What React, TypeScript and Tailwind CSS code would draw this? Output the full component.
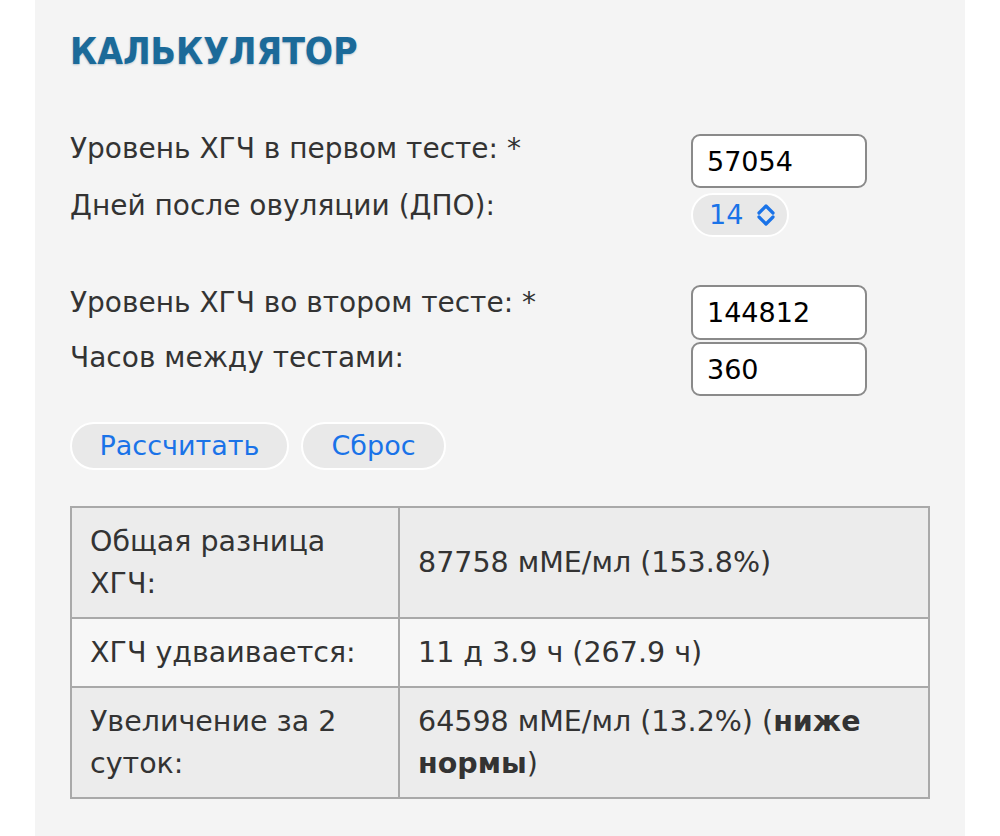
import { useState } from 'react';

function UpDownIcon() {
  return (
    <svg width="22" height="24" viewBox="0 0 22 24" fill="none" stroke="currentColor" strokeWidth="3.2" strokeLinecap="round" strokeLinejoin="round">
      <path d="M4 10 L11 3 L18 10" />
      <path d="M4 14 L11 21 L18 14" />
    </svg>
  );
}

const rows = [
  { label: 'Общая разница ХГЧ:', value: <>87758 мМЕ/мл (153.8%)</>, shade: true },
  { label: 'ХГЧ удваивается:', value: <>11 д 3.9 ч (267.9 ч)</>, shade: false },
  {
    label: 'Увеличение за 2 суток:',
    value: (
      <>
        64598 мМЕ/мл (13.2%) (<b className="font-bold">ниже нормы</b>)
      </>
    ),
    shade: true,
  },
];

export default function App() {
  const [first, setFirst] = useState('57054');
  const [second, setSecond] = useState('144812');
  const [hours, setHours] = useState('360');

  return (
    <div className="min-h-screen bg-white font-['DejaVu_Sans',sans-serif] text-[28px] text-[#333]">
      <div className="ml-[35px] w-[930px] min-h-[836px] bg-[#f4f4f4] px-[35px] pt-[30px]">
        {/* Header */}
        <h1 className="font-['DejaVu_Sans_Condensed','DejaVu_Sans',sans-serif] text-[37px] leading-[44px] font-bold text-[#1b6a99] [text-shadow:0_1px_2px_rgba(0,60,100,0.25)]">
          КАЛЬКУЛЯТОР
        </h1>

        {/* First test */}
        <div className="mt-[57px] flex justify-between pr-[63px]">
          <div className="flex flex-col gap-[21px] leading-[36px]">
            <span>Уровень ХГЧ в первом тесте: *</span>
            <span>Дней после овуляции (ДПО):</span>
          </div>
          <div className="flex w-[176px] flex-col gap-[5px] pt-[3px]">
            <input
              value={first}
              onChange={(e) => setFirst(e.target.value)}
              className="h-[54px] w-[176px] rounded-[9px] border-2 border-[#8a8a8a] bg-white px-[14px] text-[27px] text-black outline-none"
            />
            <button className="flex h-[44px] w-[98px] items-center gap-[12px] rounded-full border-2 border-white bg-[#e8e8e8] pl-[16px] text-[27px] text-[#1a73e8]">
              <span>14</span>
              <UpDownIcon />
            </button>
          </div>
        </div>

        {/* Second test */}
        <div className="mt-[48px] flex justify-between pr-[63px]">
          <div className="flex flex-col gap-[19px] leading-[36px]">
            <span>Уровень ХГЧ во втором тесте: *</span>
            <span>Часов между тестами:</span>
          </div>
          <div className="flex w-[176px] flex-col gap-[2px]">
            <input
              value={second}
              onChange={(e) => setSecond(e.target.value)}
              className="h-[55px] w-[176px] rounded-[9px] border-2 border-[#8a8a8a] bg-white px-[14px] text-[27px] text-black outline-none"
            />
            <input
              value={hours}
              onChange={(e) => setHours(e.target.value)}
              className="h-[54px] w-[176px] rounded-[9px] border-2 border-[#8a8a8a] bg-white px-[14px] text-[27px] text-black outline-none"
            />
          </div>
        </div>

        {/* Buttons */}
        <div className="mt-[26px] flex gap-[12px]">
          <button className="h-[48px] w-[219px] rounded-full border-2 border-white bg-[#e9e9e9] text-[27px] text-[#1a73e8]">
            Рассчитать
          </button>
          <button className="h-[48px] w-[145px] rounded-full border-2 border-white bg-[#e9e9e9] text-[27px] text-[#1a73e8]">
            Сброс
          </button>
        </div>

        {/* Results */}
        <table className="mt-[36px] w-[860px] border-collapse text-[28.5px] leading-[42px]">
          <tbody>
            {rows.map((r) => (
              <tr key={r.label} className={r.shade ? 'bg-[#ececec]' : 'bg-[#f7f7f7]'}>
                <td className="w-[328px] border-2 border-[#a9a9a9] px-[18px] py-[12.5px] align-middle">{r.label}</td>
                <td className="border-2 border-[#a9a9a9] px-[18px] py-[12.5px] align-middle">{r.value}</td>
              </tr>
            ))}
          </tbody>
        </table>
      </div>
    </div>
  );
}
